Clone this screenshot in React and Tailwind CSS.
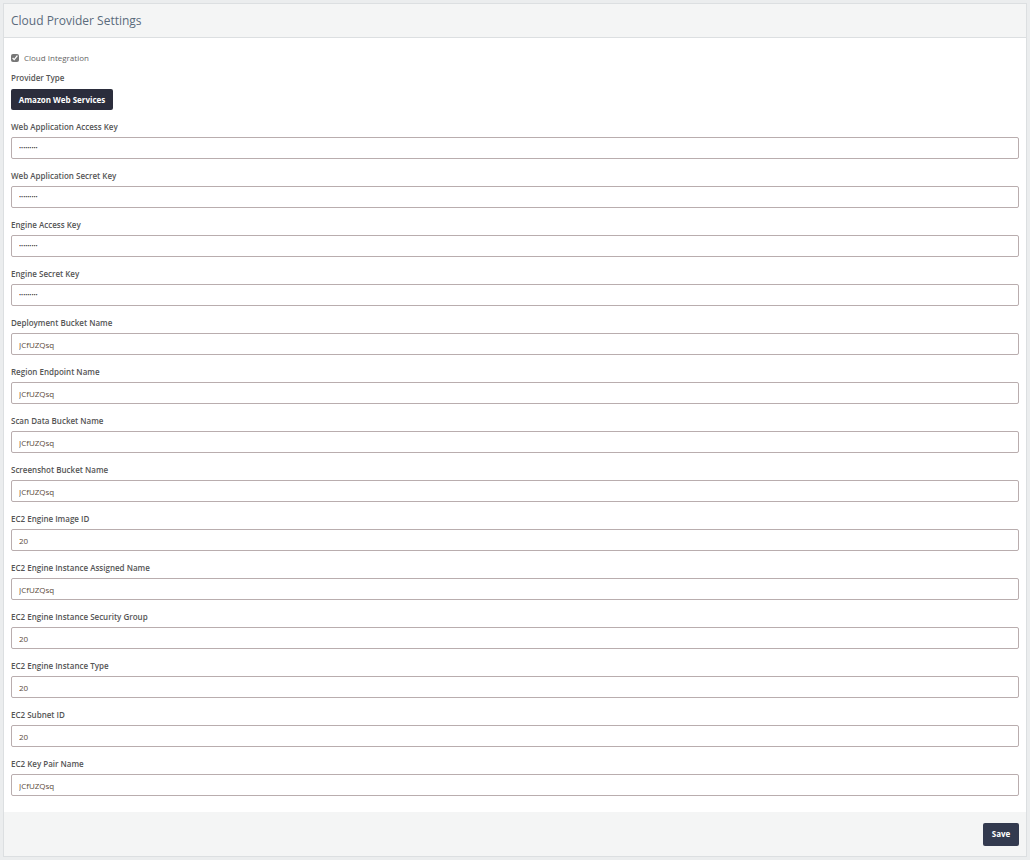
import React, { useState } from 'react';

const fields = [
  { label: 'Web Application Access Key', value: 'secretkey', secret: true },
  { label: 'Web Application Secret Key', value: 'secretkey', secret: true },
  { label: 'Engine Access Key', value: 'secretkey', secret: true },
  { label: 'Engine Secret Key', value: 'secretkey', secret: true },
  { label: 'Deployment Bucket Name', value: 'JCfUZQsq' },
  { label: 'Region Endpoint Name', value: 'JCfUZQsq' },
  { label: 'Scan Data Bucket Name', value: 'JCfUZQsq' },
  { label: 'Screenshot Bucket Name', value: 'JCfUZQsq' },
  { label: 'EC2 Engine Image ID', value: '20' },
  { label: 'EC2 Engine Instance Assigned Name', value: 'JCfUZQsq' },
  { label: 'EC2 Engine Instance Security Group', value: '20' },
  { label: 'EC2 Engine Instance Type', value: '20' },
  { label: 'EC2 Subnet ID', value: '20' },
  { label: 'EC2 Key Pair Name', value: 'JCfUZQsq' },
];

const App = () => {
  const [enabled, setEnabled] = useState(true);
  const [values, setValues] = useState(fields.map((f) => f.value));

  const update = (i, v) => {
    const next = [...values];
    next[i] = v;
    setValues(next);
  };

  return (
    <div
      className="min-h-[860px] bg-[#ebedee] pt-[3px] px-[3px] pb-[3px] text-[#555]"
      style={{ fontFamily: '"Open Sans", "Noto Sans", sans-serif' }}
    >
      <div className="bg-white border border-[#dcdfe1]">
        {/* header */}
        <div className="h-[34px] bg-[#f4f5f5] border-b border-[#dcdfe1] flex items-center px-[7px]">
          <h2 className="text-[12px] text-[#5a6b7c]">Cloud Provider Settings</h2>
        </div>

        {/* body */}
        <div className="px-[7px] pt-[14px] pb-[5px]">
          <label className="flex items-center gap-[5px] h-[12px] mb-[8px] text-[8px] text-[#666]">
            <input
              type="checkbox"
              checked={enabled}
              onChange={(e) => setEnabled(e.target.checked)}
              className="w-[8px] h-[8px] m-0 accent-[#777]"
            />
            Cloud Integration
          </label>

          <div className="text-[8px] font-semibold leading-[12px] mb-[5px] text-[#555]">Provider Type</div>
          <button className="block h-[21px] w-[102px] bg-[#2b2d3c] text-white text-[8px] font-bold rounded-[2px] mb-[11px]">
            Amazon Web Services
          </button>

          {fields.map((f, i) => (
            <div key={f.label} className="mb-[11px]">
              <div className="text-[8px] font-semibold leading-[12px] mb-[4px] text-[#555]">{f.label}</div>
              <input
                type={f.secret ? 'password' : 'text'}
                value={values[i]}
                onChange={(e) => update(i, e.target.value)}
                className={`block w-full h-[22px] px-[7px] border border-[#b9adae] rounded-[2px] outline-none ${
                  f.secret ? 'text-[5.5px] text-[#333]' : 'text-[8px] text-[#5b4a3c]'
                }`}
              />
            </div>
          ))}
        </div>

        {/* footer */}
        <div className="h-[44px] bg-[#f4f5f5] flex items-center justify-end px-[7px]">
          <button className="h-[23px] w-[36px] bg-[#333a4f] text-white text-[8px] font-bold rounded-[2px]">
            Save
          </button>
        </div>
      </div>
    </div>
  );
};

export default App;
